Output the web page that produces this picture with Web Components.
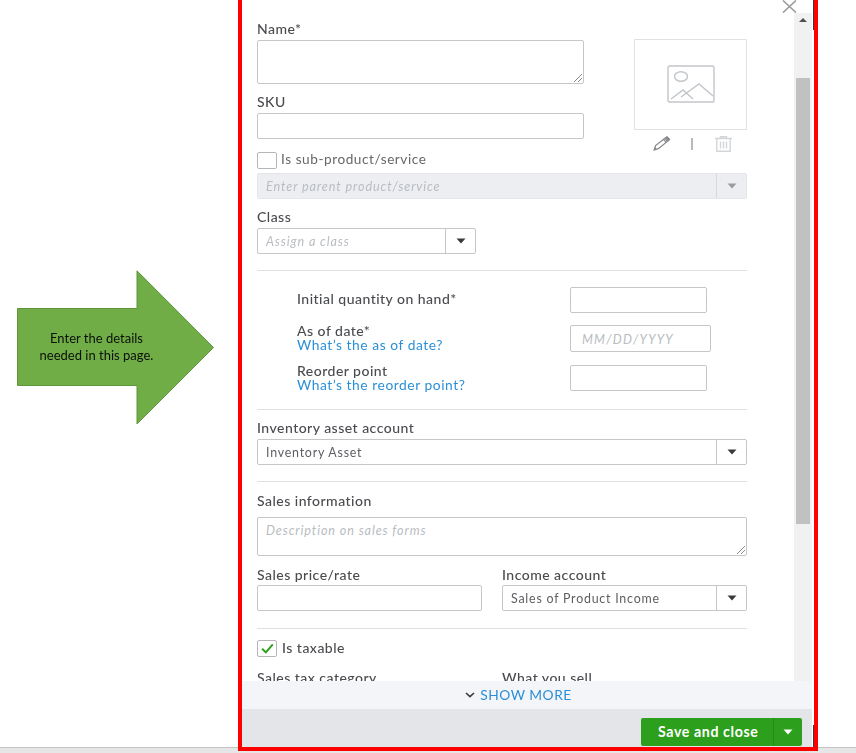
<!DOCTYPE html>
<html><head><meta charset="utf-8"><title>Product</title>
<style>html,body{margin:0;padding:0;background:#fff;overflow:hidden}</style></head>
<body>
<qb-page>
  <qb-arrow slot="left">Enter the details<br>needed in this page.</qb-arrow>
  <qb-panel slot="panel">
    <qb-form>
      <qb-top style="margin-top:21px">
        <qb-label>Name*</qb-label>
        <qb-input w="327" h="44" grip style="margin-top:3px"></qb-input>
        <qb-label style="margin-top:10px">SKU</qb-label>
        <qb-input w="327" h="26" style="margin-top:3px"></qb-input>
        <qb-check style="margin-top:13px">Is sub-product/service</qb-check>
        <qb-photo slot="side"></qb-photo>
      </qb-top>
      <qb-select w="490" disabled placeholder style="margin-top:4px">Enter parent product/service</qb-select>
      <qb-label style="margin-top:10px">Class</qb-label>
      <qb-select w="219" placeholder style="margin-top:3px">Assign a class</qb-select>
      <qb-rule style="margin-top:16px"></qb-rule>
      <qb-qty style="margin-top:16px" w="137" h="26"><qb-label slot="label" style="margin-top:4px">Initial quantity on hand*</qb-label></qb-qty>
      <qb-qty style="margin-top:12px" w="141" h="27" ph="MM/DD/YYYY"><qb-label slot="label" tight style="margin-top:-1px">As of date*</qb-label><qb-link slot="label">What’s the as of date?</qb-link></qb-qty>
      <qb-qty style="margin-top:13px" w="137" h="26"><qb-label slot="label" tight style="margin-top:-1px">Reorder point</qb-label><qb-link slot="label">What’s the reorder point?</qb-link></qb-qty>
      <qb-rule style="margin-top:17px"></qb-rule>
      <qb-label style="margin-top:10px">Inventory asset account</qb-label>
      <qb-select w="490" style="margin-top:3px">Inventory Asset</qb-select>
      <qb-rule style="margin-top:16px"></qb-rule>
      <qb-label style="margin-top:11px">Sales information</qb-label>
      <qb-input w="490" h="39" grip ph="Description on sales forms" style="margin-top:8px"></qb-input>
      <qb-two style="margin-top:11px">
        <qb-label>Sales price/rate</qb-label>
        <qb-label>Income account</qb-label>
        <qb-input w="225" h="26" style="margin-top:2px"></qb-input>
        <qb-select w="245" style="margin-top:2px">Sales of Product Income</qb-select>
      </qb-two>
      <qb-rule style="margin-top:17px"></qb-rule>
      <qb-check checked style="margin-top:11px">Is taxable</qb-check>
      <qb-two style="margin-top:13px">
        <qb-label>Sales tax category</qb-label>
        <qb-label>What you sell</qb-label>
      </qb-two>
    </qb-form>
    <qb-scrollbar slot="bar"></qb-scrollbar>
    <qb-more slot="more">SHOW MORE</qb-more>
    <qb-foot slot="foot"><qb-save>Save and close</qb-save></qb-foot>
  </qb-panel>
</qb-page>
<script>
const FONT='"Lato","Open Sans",sans-serif';
const TXT='#4a4b4f';
function def(name,css,html){
  customElements.define(name,class extends HTMLElement{
    constructor(){
      super();
      const r=this.attachShadow({mode:'open'});
      r.innerHTML='<style>'+css+'</style>'+(typeof html==='function'?html(this):html);
    }
  });
}
const attr=(e,n,d='')=>e.hasAttribute(n)?e.getAttribute(n):d;
const caret=(c)=>`<svg width="10" height="6" viewBox="0 0 10 6"><path d="M0.5 0.5h9L5 5.5z" fill="${c}"/></svg>`;

def('qb-page',`:host{display:grid;grid-template-columns:238px 580px 38px;width:856px;height:753px;
  background:linear-gradient(#fff 747px,#c4c4c4 747px,#c4c4c4 748px,#e6e6e6 748px);font-family:${FONT}}
  .l{display:block;padding:270px 0 0 17px}`,
  `<div class="l"><slot name="left"></slot></div><slot name="panel"></slot>`);

def('qb-arrow',`:host{display:flex;position:relative;width:198px;height:155px;align-items:center;box-sizing:border-box;padding:0 39px 2px 0;
   font:13px/17px "Lato",sans-serif;color:#0c100a}
  svg{position:absolute;left:0;top:0}
  .t{position:relative;width:100%;text-align:center;filter:blur(.25px)}`,
  `<svg width="198" height="155" viewBox="0 0 198 155"><path d="M.5 38.5H120V.8L196.5 77.5 120 154V115.5H.5z" fill="#70ad47" stroke="#5e9639"/></svg><div class="t"><slot></slot></div>`);

def('qb-panel',`:host{display:grid;grid-template-columns:552px 18px;grid-template-rows:681px 28px 38px;box-sizing:border-box;width:580px;height:751px;
   border:4px solid #fe0000;border-top:0;background:#fff;position:relative}
  .x{position:absolute;left:540px;top:0}
  .s{position:absolute;left:570.5px;width:1.5px;background:#3a3a3a}
  slot[name=more],slot[name=foot]{display:block;grid-column:1/3}`,
  `<slot></slot><slot name="bar"></slot><slot name="more"></slot><slot name="foot"></slot>
  <svg class="x" width="15" height="13" viewBox="0 0 15 13"><path d="M1 .5 14 12.5M14 .5 1 12.5" stroke="#9b9b9b" stroke-width="1.6" fill="none"/></svg>
  <div class="s" style="top:0;height:30px"></div><div class="s" style="top:725px;height:22px"></div>`);

def('qb-form',`:host{display:flex;flex-direction:column;box-sizing:border-box;height:681px;overflow:hidden;padding-left:15px;color:${TXT};filter:blur(.3px)}
  ::slotted(*){flex:none}`,`<slot></slot>`);

def('qb-top',`:host{display:flex;width:490px;justify-content:space-between}
  .c{display:flex;flex-direction:column;width:327px}`,
  `<div class="c"><slot></slot></div><slot name="side"></slot>`);

def('qb-label',`:host{display:block;font:500 14px/16px "Lato",sans-serif;letter-spacing:.48px;color:${TXT};white-space:nowrap}
  :host([tight]){line-height:14px}`,`<slot></slot>`);

def('qb-link',`:host{display:block;font:400 13.8px/14px "Lato",sans-serif;letter-spacing:.55px;color:#2b8fd6;white-space:nowrap}`,`<slot></slot>`);

def('qb-input',`:host{display:block;flex:none;position:relative;box-sizing:border-box;border:1px solid #c4c6ca;border-radius:2px;background:#fff;
   font:italic 12.6px/14px "Lato",sans-serif;letter-spacing:.9px;color:#b9bcc1}
  .p{padding:6px 8px;white-space:nowrap}
  :host([date]) .p{padding:7px 0 0 11px;letter-spacing:1.25px}
  svg{position:absolute;right:0;bottom:0}`,
  e=>{const w=attr(e,'w'),h=attr(e,'h');e.style.width=w+'px';e.style.height=h+'px';
    if(attr(e,'ph')==='MM/DD/YYYY')e.setAttribute('date','');
    return `<div class="p">${attr(e,'ph')}</div>`+(e.hasAttribute('grip')?`<svg width="10" height="10" viewBox="0 0 10 10"><path d="M1 9 9 1M5 9 9 5" stroke="#8b8b8b" stroke-width="1" fill="none"/></svg>`:'');});

def('qb-select',`:host{display:flex;box-sizing:border-box;height:26px;border:1px solid #c4c6ca;border-radius:2px;background:#fff;
    font:400 12.4px/24px "Lato",sans-serif;letter-spacing:.78px;color:#5d5e62}
  :host([placeholder]){font:italic 12.6px/24px "Lato",sans-serif;letter-spacing:.9px;color:#b9bcc1}
  :host([disabled]){background:#eceef1;border-color:#e3e5e8}
  .v{flex:1;padding:1px 0 0 8px;white-space:nowrap;overflow:hidden;box-sizing:border-box}
  .b{box-sizing:border-box;width:30px;border-left:1px solid #c4c6ca;display:flex;align-items:center;justify-content:center}
  :host([disabled]) .b{border-left-color:#d6d8dc}`,
  e=>{e.style.width=attr(e,'w')+'px';return `<div class="v"><slot></slot></div><div class="b">${caret(e.hasAttribute('disabled')?'#9a9ca1':'#393a3d')}</div>`;});

def('qb-check',`:host{display:flex;align-items:center;gap:4px;height:17px;font:500 14px/17px "Lato",sans-serif;letter-spacing:.48px;color:${TXT};white-space:nowrap}
  .b{box-sizing:border-box;width:20px;height:17px;border:1px solid #b4b6ba;border-radius:2px;background:#fff;display:flex;align-items:center;justify-content:center}
  :host(:not([checked])) .l{color:#66676b;font-weight:400;font-size:13.6px;letter-spacing:.56px;margin-top:-3px}
  :host([checked]) .l{margin:-2px 0 0 1px}`,
  e=>`<div class="b">${e.hasAttribute('checked')?`<svg width="13" height="11" viewBox="0 0 13 11"><path d="M1.2 5.8 4.8 9.4 11.8 1.4" fill="none" stroke="#2ca01c" stroke-width="2"/></svg>`:''}</div><div class="l"><slot></slot></div>`);

def('qb-photo',`:host{display:flex;flex-direction:column;width:113px;margin-top:18px}
  .box{box-sizing:border-box;width:113px;height:91px;border:1px solid #e0e1e4;display:flex;align-items:center;justify-content:center}
  .ic{display:flex;align-items:center;height:17px;padding:5px 0 0 19px}`,
  `<div class="box"><svg width="48" height="39" viewBox="0 0 48 39" fill="none" stroke="#c2c5ca" stroke-width="1.4"><rect x="1" y="1" width="46" height="36" rx="1.5"/><ellipse cx="14" cy="11.5" rx="6.5" ry="4.8"/><path d="M4 34 16 25 26 34M14 32 32 19 46 31"/></svg></div>
  <div class="ic"><svg width="18" height="15" viewBox="0 0 18 15" fill="none" stroke="#85878c" stroke-width="1.2"><path d="M1.5 13.5 2.6 9.6 11.8 2.4 14.6 5.3 5.4 12.6z"/><path d="M10.5 3.5 13.4 6.4"/><path d="M12.8 1.6 14 .8 16.6 3.4 15.6 4.6z" fill="#85878c"/><path d="M1.2 14 3 13.4 1.8 12z" fill="#85878c"/></svg>
  <svg style="margin-left:20px" width="2" height="12" viewBox="0 0 2 12"><path d="M1 0v12" stroke="#8b8d92" stroke-width="1.2"/></svg>
  <svg style="margin-left:22px" width="17" height="16" viewBox="0 0 17 16" fill="none" stroke="#d3d5d9" stroke-width="1.4"><path d="M0 2.5h17M5.5 2.5V.7h6v1.8M1.8 2.5v12.8h13.4V2.5"/><path d="M5.5 5.5v7M8.5 5.5v7M11.5 5.5v7"/></svg></div>`);

def('qb-rule',`:host{display:block;width:490px;height:1px;background:#dfe0e3}`,``);

def('qb-qty',`:host{display:grid;grid-template-columns:273px auto;padding-left:40px;justify-content:start}
  .l{display:flex;flex-direction:column}`,
  e=>`<div class="l"><slot name="label"></slot></div><qb-input w="${attr(e,'w')}" h="${attr(e,'h')}" ph="${attr(e,'ph')}"></qb-input>`);

def('qb-two',`:host{display:grid;grid-template-columns:225px 245px;column-gap:20px;width:490px}`,`<slot></slot>`);

def('qb-scrollbar',`:host{display:flex;flex-direction:column;background:#f1f1f1;margin-top:13px;height:668px;box-sizing:border-box;padding:0 2px}
  .a{height:65px;display:flex;justify-content:center;padding-top:5px;box-sizing:border-box}
  .t{height:446px;background:#c1c1c1}`,
  `<div class="a"><svg width="8" height="4" viewBox="0 0 8 4"><path d="M0 4 4 0 8 4z" fill="#505050"/></svg></div><div class="t"></div>`);

def('qb-more',`:host{display:flex;align-items:center;justify-content:center;gap:5px;height:28px;background:#f4f5f8;padding-right:17px;box-sizing:border-box;
   font:400 13.8px/28px "Lato",sans-serif;letter-spacing:.5px;color:#2b8fd6;filter:blur(.25px)}
  svg{display:block}`,
  `<svg width="10" height="6" viewBox="0 0 10 6" fill="none" stroke="#393a3d" stroke-width="1.6"><path d="M1 1 5 4.6 9 1"/></svg><slot></slot>`);

def('qb-foot',`:host{display:flex;justify-content:flex-end;align-items:flex-start;height:38px;background:#e3e5e8;padding:9px 10px 0 0;box-sizing:border-box}`,`<slot></slot>`);

def('qb-save',`:host{display:flex;width:161px;height:28px;background:#2ca01c;border-radius:2px;color:#fff;font:700 14.2px/28px "Lato",sans-serif;letter-spacing:.6px}
  .a{width:133px;box-sizing:border-box;padding-left:17px;white-space:nowrap;border-right:1px solid #258c17}
  .b{flex:1;display:flex;align-items:center;justify-content:center}`,
  `<div class="a"><slot></slot></div><div class="b">${caret('#fff')}</div>`);
</script>
</body></html>
